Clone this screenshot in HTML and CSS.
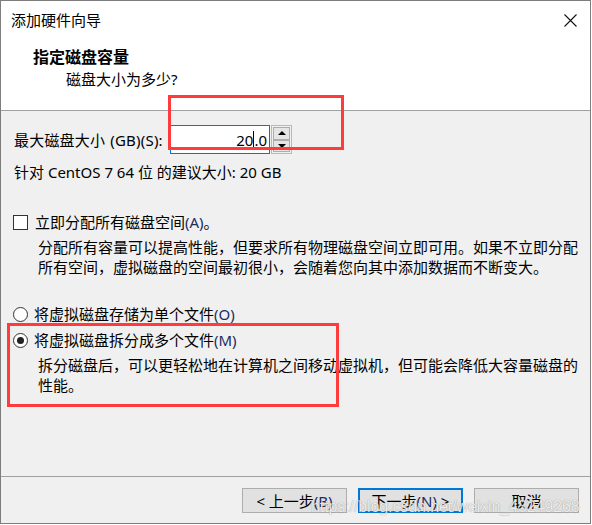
FILE: index.html
```html
<!DOCTYPE html>
<html lang="zh-CN">
<head>
<meta charset="utf-8">
<title>添加硬件向导</title>
<link rel="stylesheet" href="styles.css">
</head>
<body>
<div class="window">
  <div class="top">
    <div class="titlebar">
      <span class="title">添加硬件向导</span>
      <svg class="close" width="13" height="13" viewBox="0 0 13 13"><path d="M0.5 0.5 L12.5 12.5 M12.5 0.5 L0.5 12.5" stroke="#111" stroke-width="1.1" fill="none"/></svg>
    </div>
    <div class="header">
      <div class="h-title">指定磁盘容量</div>
      <div class="h-sub">磁盘大小为多少?</div>
    </div>
  </div>
  <div class="content">
    <div class="size-row">
      <span class="size-label">最大磁盘大小 (GB)(S):</span>
      <div class="input"><span>20</span><span class="caret"></span><span>.0</span></div>
      <div class="spin">
        <div class="spin-btn"><span class="arrow-up"></span></div>
        <div class="spin-btn"><span class="arrow-down"></span></div>
      </div>
    </div>
    <div class="hint">针对 CentOS 7 64 位 的建议大小: 20 GB</div>
    <div class="option opt-check">
      <span class="checkbox"></span>
      <span>立即分配所有磁盘空间<span class="key">(A)</span>。</span>
    </div>
    <div class="desc">分配所有容量可以提高性能，但要求所有物理磁盘空间立即可用。如果不立即分配<br>所有空间，虚拟磁盘的空间最初很小，会随着您向其中添加数据而不断变大。</div>
    <div class="option opt-radio1">
      <span class="radio"></span>
      <span>将虚拟磁盘存储为单个文件<span class="key">(O)</span></span>
    </div>
    <div class="option opt-radio2">
      <span class="radio checked"></span>
      <span>将虚拟磁盘拆分成多个文件<span class="key">(M)</span></span>
    </div>
    <div class="desc">拆分磁盘后，可以更轻松地在计算机之间移动虚拟机，但可能会降低大容量磁盘的<br>性能。</div>
  </div>
  <div class="footer">
    <button class="btn">&lt; 上一步<span class="key">(B)</span></button>
    <button class="btn primary">下一步<span class="key">(N)</span> &gt;</button>
    <button class="btn">取消</button>
  </div>
  <div class="mark mark1"></div>
  <div class="mark mark2"></div>
  <div class="watermark">https://blog.csdn.net/weixin_43249268</div>
</div>
</body>
</html>
```
FILE: styles.css
```css
* { box-sizing: border-box; }
html, body { margin: 0; padding: 0; background: #ffffff; }
body {
  font-family: "Noto Sans", "Noto Sans CJK SC", sans-serif;
  font-size: 15px;
  color: #000;
}
.window {
  position: relative;
  width: 591px;
  height: 524px;
  border: 1px solid #7d7d7d;
  background: #f0f0f0;
  display: flex;
  flex-direction: column;
  overflow: hidden;
}
.top {
  background: #ffffff;
  border-bottom: 1px solid #a0a0a0;
  height: 110px;
}
.titlebar {
  height: 38px;
  display: flex;
  align-items: center;
  padding-left: 10px;
  padding-right: 13px;
}
.title { font-size: 15px; line-height: 20px; }
.close { margin-left: auto; }
.header {
  padding: 8px 0 0 32px;
}
.h-title { font-weight: bold; font-size: 16px; line-height: 20px; }
.h-sub { line-height: 20px; margin-top: 2px; padding-left: 33px; }
.content {
  flex: 1;
  padding: 14px 12px 0 12px;
}
.size-row {
  display: flex;
  align-items: center;
  height: 29px;
}
.size-label { width: 157px; line-height: 20px; padding-left: 1px; word-spacing: 1px; letter-spacing: 0.2px; }
.input {
  width: 100px;
  height: 29px;
  border: 1px solid #0078d7;
  background: #fff;
  display: flex;
  align-items: center;
  justify-content: flex-end;
  padding-right: 2px;
  line-height: 20px;
}
.caret { width: 1px; height: 18px; background: #000; }
.spin {
  width: 21px;
  height: 29px;
  margin-left: 1px;
  border: 1px solid #b9b9b9;
  padding: 1px;
  display: flex;
  flex-direction: column;
  background: #f0f0f0;
}
.spin-btn {
  flex: 1;
  border: 1px solid #adadad;
  background: #e5e5e5;
  display: flex;
  align-items: center;
  justify-content: center;
}
.arrow-up, .arrow-down {
  width: 0; height: 0;
  border-left: 4px solid transparent;
  border-right: 4px solid transparent;
}
.arrow-up { border-bottom: 4px solid #000; }
.arrow-down { border-top: 4px solid #000; }
.hint { margin-top: 8px; line-height: 20px; padding-left: 1px; }
.option {
  display: flex;
  align-items: center;
  line-height: 20px;
}
.opt-check { margin-top: 30px; }
.opt-radio1 { margin-top: 27px; }
.opt-radio2 { margin-top: 6px; }
.checkbox {
  width: 15px; height: 15px;
  border: 1px solid #333;
  background: #fff;
  margin-right: 7px;
  flex: none;
}
.radio {
  width: 15px; height: 15px;
  border: 1px solid #333;
  border-radius: 50%;
  background: #fff;
  margin-right: 6px;
  flex: none;
  display: flex;
  align-items: center;
  justify-content: center;
}
.radio.checked::after {
  content: "";
  width: 7px; height: 7px;
  border-radius: 50%;
  background: #222;
}
.key { color: #1b2d63; }
.desc {
  margin-top: 5px;
  padding-left: 25px;
  line-height: 20px;
  white-space: nowrap;
}
.footer {
  border-top: 1px solid #a0a0a0;
  height: 47px;
  display: flex;
  justify-content: flex-end;
  gap: 11px;
  padding: 11px 11px 0 0;
}
.btn {
  width: 105px;
  height: 25px;
  border: 1px solid #adadad;
  background: #e1e1e1;
  font-family: "Noto Sans", "Noto Sans CJK SC", sans-serif;
  font-size: 15px;
  line-height: 20px;
  padding: 0;
  color: #000;
}
.btn.primary { border: 2px solid #0078d7; }
.mark {
  position: absolute;
  border: 3px solid #ff3b3b;
}
.mark1 { left: 167px; top: 94px; width: 176px; height: 55px; }
.mark2 { left: 6px; top: 322px; width: 332px; height: 84px; }
.watermark {
  position: absolute;
  left: 310px;
  top: 497px;
  font-family: "Liberation Sans", Arial, sans-serif;
  font-size: 16px;
  letter-spacing: -0.1px;
  color: rgba(255,255,255,0.85);
  text-shadow: 0 0 1px rgba(0,0,0,0.45);
  white-space: nowrap;
}
```
